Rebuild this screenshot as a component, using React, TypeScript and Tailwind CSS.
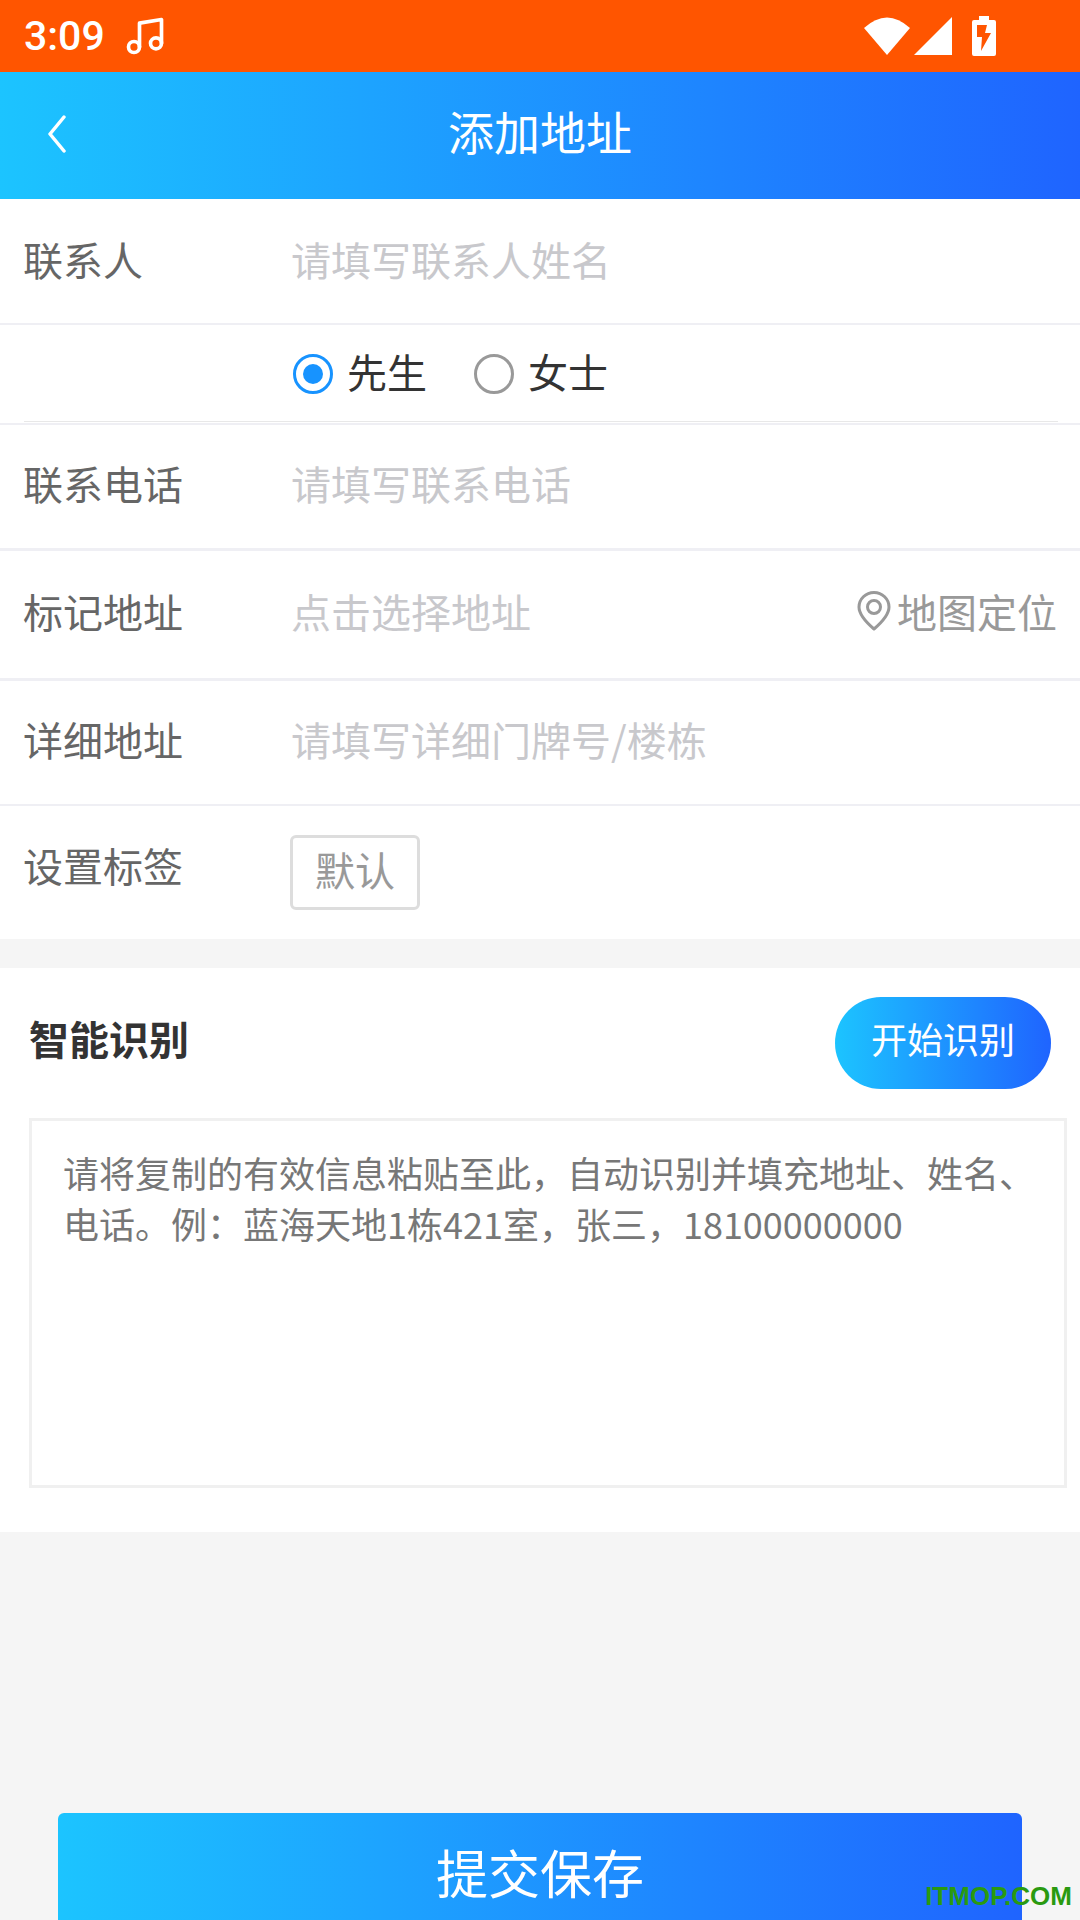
import React from "react";
import { Music } from "lucide-react";

const cjk = { fontFamily: '"Noto Sans CJK SC", "Noto Sans", sans-serif' };

const Row: React.FC<{
  label: string;
  placeholder: string;
  className: string;
  children?: React.ReactNode;
}> = ({ label, placeholder, className, children }) => (
  <div className={`flex flex-none items-center bg-white pl-[23px] pr-[23px] ${className}`}>
    <span className="w-[268px] flex-none text-[40px] leading-none text-[#666]">
      {label}
    </span>
    <span className="flex-1 text-[40px] leading-none text-[#c8c8cc]">
      {placeholder}
    </span>
    {children}
  </div>
);

const Radio: React.FC<{ checked?: boolean; label: string }> = ({
  checked,
  label,
}) => (
  <div className="flex items-center">
    <span
      className={`mt-[5px] flex h-10 w-10 items-center justify-center rounded-full border-[3px] ${
        checked ? "border-[#1793ff]" : "border-[#999]"
      }`}
    >
      {checked && <span className="h-5 w-5 rounded-full bg-[#1793ff]" />}
    </span>
    <span className="ml-[14px] text-[40px] leading-none text-[#333]">{label}</span>
  </div>
);

const StatusBar = () => (
  <div className="flex h-[72px] flex-none items-center bg-[#ff5500] pl-6 text-white">
    <span
      className="text-[41px] font-medium leading-none"
      style={{ fontFamily: "Roboto, sans-serif" }}
    >
      3:09
    </span>
    <Music size={44} strokeWidth={2} className="ml-[18px]" />
    <svg width="46" height="38" viewBox="0 0 46 38" className="ml-[697px]">
      <path d="M0 11 Q23 -10 46 11 L23 38 Z" fill="#fff" />
    </svg>
    <svg width="38" height="38" viewBox="0 0 38 38" className="ml-1">
      <path d="M38 0 V38 H0 Z" fill="#fff" />
    </svg>
    <svg width="24" height="40" viewBox="0 0 24 40" className="ml-[20px]">
      <path
        fillRule="evenodd"
        d="M7 0 H17 V4 H22 Q24 4 24 6 V38 Q24 40 22 40 H2 Q0 40 0 38 V6 Q0 4 2 4 H7 Z M5 9 V21 H10 L9 35 L19 17 H13 L15 9 Z"
        fill="#fff"
      />
    </svg>
  </div>
);

const App = () => {
  return (
    <div
      lang="zh-CN"
      className="relative flex h-[1920px] flex-col overflow-hidden bg-[#f5f5f5]"
      style={cjk}
    >
      <StatusBar />
      <div className="relative flex h-[127px] flex-none items-center justify-center bg-[linear-gradient(90deg,#1cc4ff,#1f64ff)] pb-[12px]">
        <svg
          width="24"
          height="38"
          viewBox="0 0 24 38"
          fill="none"
          className="absolute left-[45px] top-[43px]"
        >
          <path
            d="M19 2 L5 19 L19 36"
            stroke="#fff"
            strokeWidth="3.5"
            strokeLinecap="round"
            strokeLinejoin="round"
          />
        </svg>
        <span className="text-[46px] leading-none text-white">添加地址</span>
      </div>

      <Row
        label="联系人"
        placeholder="请填写联系人姓名"
        className="h-[126px] border-b-2 border-[#efeff4] pb-[5px]"
      />
      <div className="h-[100px] flex-none border-b-2 border-[#efeff4] bg-white pl-6 pr-[22px]">
        <div className="flex h-[97px] items-center gap-[47px] border-b border-[#e8e8e8] pl-[269px] pb-1">
          <Radio checked label="先生" />
          <Radio label="女士" />
        </div>
      </div>
      <Row
        label="联系电话"
        placeholder="请填写联系电话"
        className="h-[126px] border-b-[3px] border-[#efeff4] pb-[8px]"
      />
      <Row
        label="标记地址"
        placeholder="点击选择地址"
        className="h-[130px] border-b-[3px] border-[#efeff4] pb-[8px]"
      >
        <svg width="34" height="40" viewBox="0 0 34 40" fill="none">
          <path
            d="M17 38 C10 32 2 24 2 16 A15 14.5 0 0 1 32 16 C32 24 24 32 17 38 Z"
            stroke="#999"
            strokeWidth="3"
            strokeLinejoin="round"
          />
          <circle cx="17" cy="16" r="6.5" stroke="#999" strokeWidth="3" />
        </svg>
        <span className="ml-[6px] text-[40px] leading-none text-[#999]">
          地图定位
        </span>
      </Row>
      <Row
        label="详细地址"
        placeholder="请填写详细门牌号/楼栋"
        className="h-[125px] border-b-2 border-[#efeff4] pb-[8px]"
      />
      <div className="flex h-[133px] flex-none bg-white pl-[23px]">
        <span className="mt-[36px] w-[267px] flex-none text-[40px] leading-[46px] text-[#666]">
          设置标签
        </span>
        <span className="mt-[29px] flex h-[75px] w-[130px] items-center justify-center rounded-[6px] border-[3px] border-[#ddd] pb-[8px] text-[40px] leading-none text-[#999]">
          默认
        </span>
      </div>

      <div className="mt-[29px] h-[564px] flex-none bg-white pt-[29px] pl-[29px] pr-[13px]">
        <div className="flex h-[92px] items-center justify-between pr-[16px]">
          <span className="mb-[10px] text-[40px] font-bold leading-none text-[#333]">
            智能识别
          </span>
          <button className="h-[92px] w-[216px] rounded-full bg-[linear-gradient(90deg,#1cc4ff,#1f64ff)] pb-[10px] text-[36px] leading-none text-white">
            开始识别
          </button>
        </div>
        <div className="mt-[29px] h-[370px] border-[3px] border-[#f0f0f0] pl-[31px] pr-[20px] pt-[26px] text-[36px] leading-[51px] text-[#777]">
          请将复制的有效信息粘贴至此，自动识别并填充地址、姓名、电话。例：蓝海天地1栋421室，张三，18100000000
        </div>
      </div>

      <button className="mx-[58px] mt-[281px] h-[124px] flex-none rounded-[6px] bg-[linear-gradient(90deg,#1cc4ff,#1f64ff)] pb-[6px] text-[52px] leading-none text-white">
        提交保存
      </button>

      <span
        className="absolute bottom-[11px] right-[8px] text-[26px] font-bold leading-none text-[#2a9a10]"
        style={{ fontFamily: '"Liberation Sans", sans-serif' }}
      >
        ITMOP.COM
      </span>
    </div>
  );
};

export default App;
